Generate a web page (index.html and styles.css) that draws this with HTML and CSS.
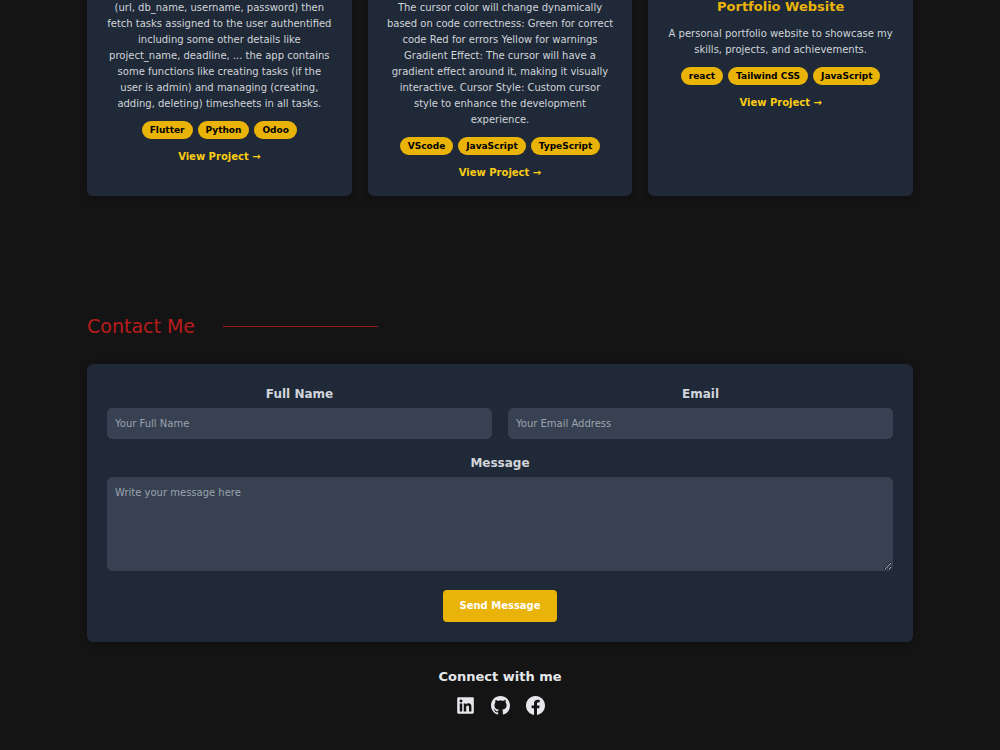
FILE: index.html
```html
<!DOCTYPE html>
<html lang="en">
<head>
  <meta charset="UTF-8" />
  <meta name="viewport" content="width=device-width, initial-scale=1.0" />
  <title>Portfolio</title>
  <link rel="stylesheet" href="styles.css">
</head>
<body>
  <main>
    <section class="projects">
      <article class="card">
        <p>(url, db_name, username, password) then fetch tasks assigned to the user authentified including some other details like project_name, deadline, ... the app contains some functions like creating tasks (if the<br> user is admin) and managing (creating, adding, deleting) timesheets in all tasks.</p>
        <div class="tags">
          <span>Flutter</span>
          <span>Python</span>
          <span>Odoo</span>
        </div>
        <a href="#" class="view">View Project →</a>
      </article>
      <article class="card">
        <p>The cursor color will change dynamically based on code correctness: Green for correct code Red for errors Yellow for warnings Gradient Effect: The cursor will have a gradient effect around it, making it visually interactive. Cursor Style: Custom cursor<br> style to enhance the development experience.</p>
        <div class="tags">
          <span>VScode</span>
          <span>JavaScript</span>
          <span>TypeScript</span>
        </div>
        <a href="#" class="view">View Project →</a>
      </article>
      <article class="card">
        <h3>Portfolio Website</h3>
        <p>A personal portfolio website to showcase my skills, projects, and achievements.</p>
        <div class="tags">
          <span>react</span>
          <span>Tailwind CSS</span>
          <span>JavaScript</span>
        </div>
        <a href="#" class="view">View Project →</a>
      </article>
    </section>

    <section class="contact" id="contact">
      <h2>Contact Me</h2>
      <form>
        <div class="row">
          <div class="field">
            <label for="name">Full Name</label>
            <input type="text" id="name" placeholder="Your Full Name">
          </div>
          <div class="field">
            <label for="email">Email</label>
            <input type="email" id="email" placeholder="Your Email Address">
          </div>
        </div>
        <div class="field">
          <label for="message">Message</label>
          <textarea id="message" placeholder="Write your message here"></textarea>
        </div>
        <button type="submit">Send Message</button>
      </form>
    </section>
  </main>

  <footer>
    <h4>Connect with me</h4>
    <div class="social">
      <a href="#" aria-label="LinkedIn">
        <svg viewBox="0 0 448 512"><path d="M416 32H31.9C14.3 32 0 46.5 0 64.3v383.400C0 465.500 14.300 480 31.900 480H416c17.600 0 32-14.500 32-32.300V64.300c0-17.800-14.400-32.300-32-32.300zM135.400 416H69V202.200h66.500V416zm-33.200-243c-21.300 0-38.500-17.300-38.500-38.500S80.900 96 102.200 96c21.200 0 38.500 17.300 38.500 38.500 0 21.300-17.200 38.500-38.500 38.500zm282.100 243h-66.400V312c0-24.800-.5-56.700-34.500-56.700-34.600 0-39.900 27-39.900 54.900V416h-66.400V202.200h63.700v29.200h.9c8.900-16.800 30.600-34.500 62.900-34.500 67.200 0 79.700 44.300 79.700 101.900V416z"/></svg>
      </a>
      <a href="#" aria-label="GitHub">
        <svg viewBox="0 0 16 16"><path d="M8 0C3.580 0 0 3.580 0 8c0 3.540 2.290 6.530 5.470 7.590.4.070.55-.17.55-.38 0-.19-.01-.82-.01-1.490-2.010.37-2.530-.49-2.690-.94-.09-.23-.48-.94-.82-1.130-.28-.15-.68-.52-.01-.53.63-.01 1.080.58 1.230.82.72 1.210 1.870.87 2.330.66.07-.52.28-.87.51-1.070-1.780-.2-3.640-.89-3.640-3.950 0-.87.31-1.590.82-2.150-.08-.2-.36-1.020.08-2.120 0 0 .67-.21 2.200.82.64-.18 1.320-.27 2-.27s1.360.09 2 .27c1.530-1.040 2.200-.82 2.200-.82.44 1.100.16 1.920.08 2.120.51.56.82 1.270.82 2.150 0 3.070-1.870 3.750-3.650 3.950.29.25.54.73.54 1.480 0 1.070-.01 1.930-.01 2.200 0 .21.15.46.55.38A8.010 8.010 0 0 0 16 8c0-4.420-3.580-8-8-8z"/></svg>
      </a>
      <a href="#" aria-label="Facebook">
        <svg viewBox="0 0 16 16"><path d="M16 8.049c0-4.446-3.582-8.050-8-8.050C3.580 0 0 3.603 0 8.050c0 4.017 2.926 7.347 6.750 7.951v-5.625H4.719V8.050H6.750V6.275c0-2.017 1.195-3.131 3.022-3.131.876 0 1.791.157 1.791.157v1.980h-1.009c-.993 0-1.303.621-1.303 1.258v1.510h2.218l-.354 2.326H9.250V16c3.824-.604 6.750-3.934 6.750-7.951z"/></svg>
      </a>
    </div>
  </footer>
</body>
</html>
```

FILE: styles.css
```css
* {
  box-sizing: border-box;
}
body {
  margin: 0;
  font-family: 'DejaVu Sans', sans-serif;
  font-size: 10px;
  line-height: 16px;
  background: #141414;
  color: #e5e7eb;
  text-align: center;
}
main {
  padding: 0 87px;
}
h2, h3, h4, p {
  margin: 0;
}
a {
  text-decoration: none;
}

/* Projects */
.projects {
  display: grid;
  grid-template-columns: repeat(3, 1fr);
  gap: 16px;
}
.card {
  background: #1f2937;
  border-radius: 0 0 6px 6px;
  box-shadow: 0 2px 6px rgba(0, 0, 0, 0.3);
  padding: 0 18px 15px;
}
.card h3 {
  color: #eab308;
  font-size: 13px;
  line-height: 14px;
  margin-bottom: 12px;
}
.card p {
  color: #d1d5db;
}
.tags {
  display: flex;
  justify-content: center;
  gap: 5px;
  margin: 9px 0 10px;
}
.tags span {
  background: #eab308;
  color: #000;
  font-size: 9px;
  font-weight: bold;
  line-height: 12px;
  padding: 3px 8px;
  border-radius: 9px;
}
.view {
  color: #facc15;
  font-weight: bold;
}

/* Contact */
.contact {
  margin-top: 116px;
}
.contact h2 {
  display: flex;
  align-items: center;
  gap: 28px;
  color: #b91c1c;
  font-size: 19px;
  font-weight: normal;
  line-height: 28px;
  margin-bottom: 24px;
}
.contact h2::after {
  content: '';
  width: 155px;
  height: 1px;
  background: #991b1b;
}
form {
  background: #1f2937;
  border-radius: 6px;
  box-shadow: 0 2px 6px rgba(0, 0, 0, 0.3);
  padding: 20px;
}
.row {
  display: grid;
  grid-template-columns: 1fr 1fr;
  gap: 16px;
  margin-bottom: 14px;
}
label {
  display: block;
  color: #d1d5db;
  font-size: 12px;
  font-weight: bold;
  line-height: 20px;
  margin-bottom: 4px;
}
input,
textarea {
  display: block;
  width: 100%;
  padding: 7px;
  border: 1px solid #374151;
  border-radius: 5px;
  background: #374151;
  color: #fff;
  font: inherit;
}
input {
  height: 31px;
}
textarea {
  height: 94px;
}
input::placeholder,
textarea::placeholder {
  color: #9ca3af;
}
button {
  margin: 19px 0 0;
  padding: 8px 16px;
  border: none;
  border-radius: 4px;
  background: #eab308;
  color: #fff;
  font: inherit;
  font-weight: bold;
  cursor: pointer;
}

/* Footer */
footer {
  padding: 25px 0 32px;
}
footer h4 {
  font-size: 13px;
  line-height: 20px;
  margin-bottom: 9px;
}
.social {
  display: flex;
  justify-content: center;
  gap: 16px;
}
.social a {
  display: flex;
  color: #e5e7eb;
}
.social svg {
  width: 19px;
  height: 19px;
  fill: currentColor;
}
```
